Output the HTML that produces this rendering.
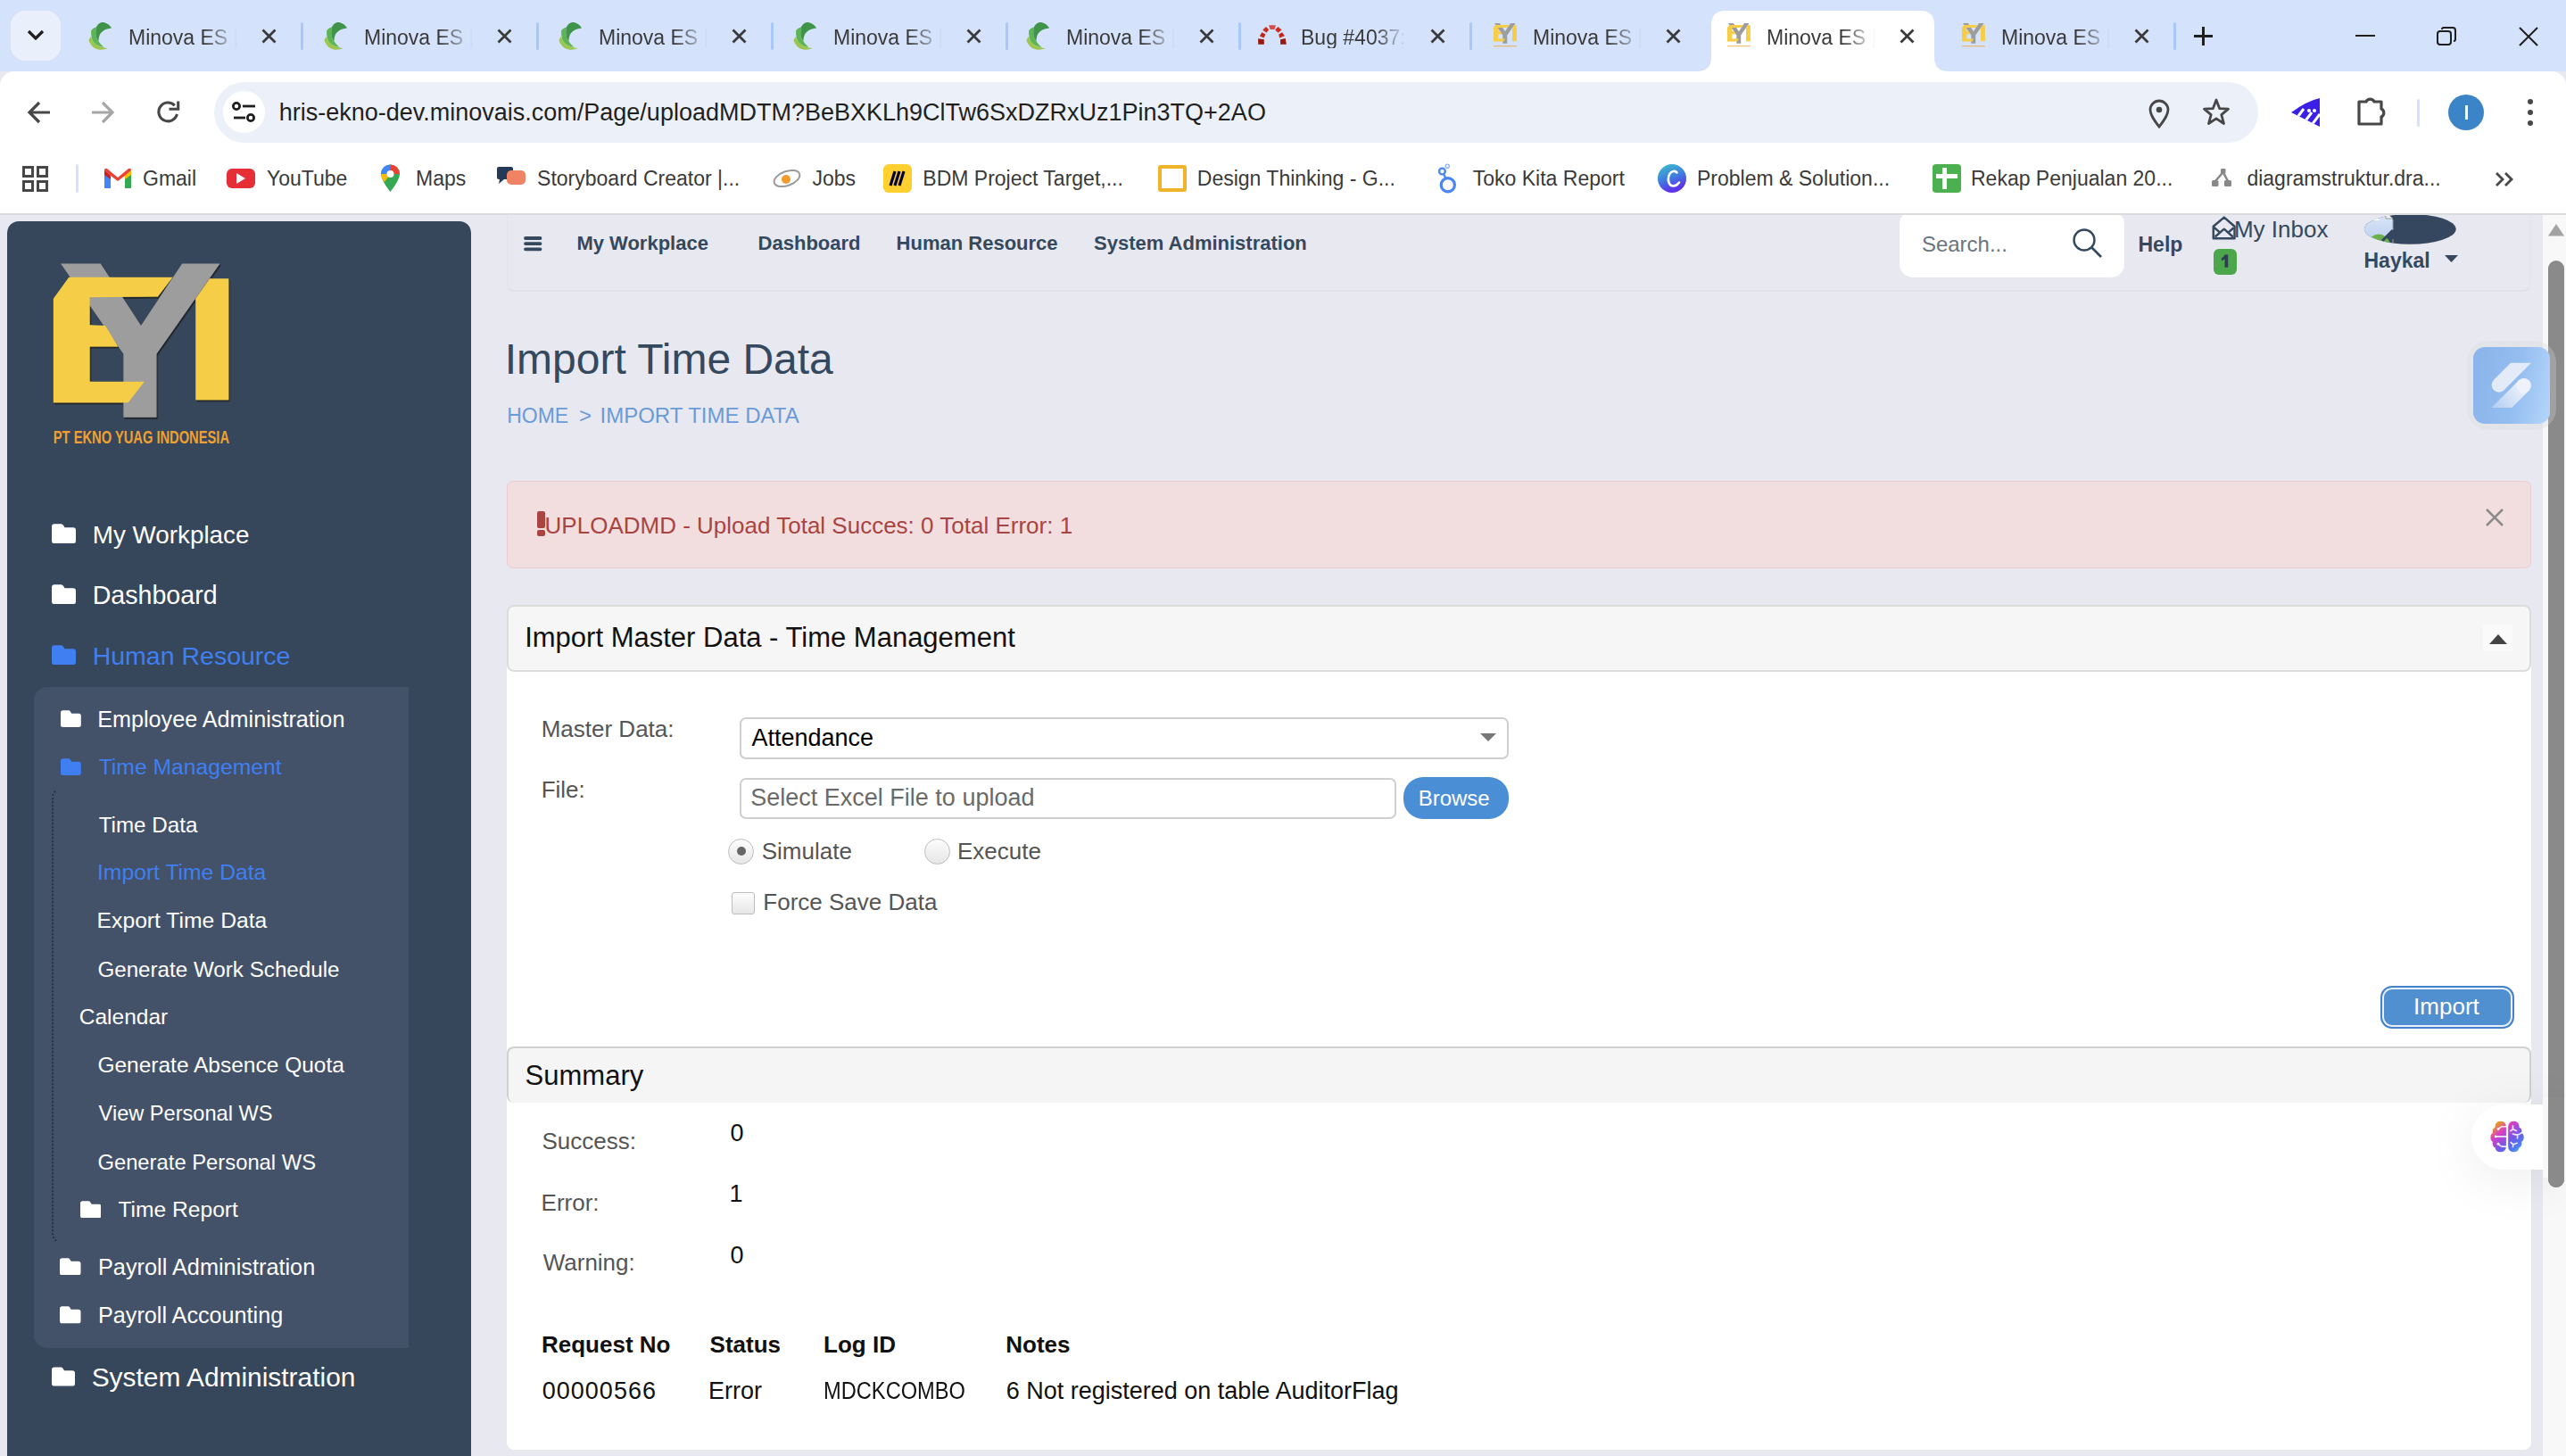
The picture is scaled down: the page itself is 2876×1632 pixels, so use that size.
<!DOCTYPE html>
<html><head><meta charset="utf-8"><style>
html,body{margin:0;padding:0;}
body{width:2876px;height:1632px;overflow:hidden;position:relative;background:#e8e8f0;font-family:"Liberation Sans",sans-serif;}
.t{position:absolute;white-space:nowrap;line-height:1;}
.r{position:absolute;}
.tabt{overflow:hidden;-webkit-mask-image:linear-gradient(90deg,#000 70%,transparent 100%);mask-image:linear-gradient(90deg,#000 70%,transparent 100%);}
</style></head><body>
<div class="r" style="left:0px;top:241px;width:2876px;height:1391px;background:#e8e8f0"></div>
<div class="r" style="left:2850px;top:241px;width:26px;height:1391px;background:#f8f8f8"></div>
<svg class="r" style="left:2856px;top:250px;" width="18" height="16" viewBox="0 0 18 16"><path d="M9 1 L18 14.5 L0 14.5 Z" fill="#a3a3a3"/></svg>
<div class="r" style="left:2856px;top:292px;width:18px;height:1039px;background:#8a8a8a;border-radius:9px"></div>
<div class="r" style="left:8px;top:248px;width:520px;height:1452px;background:#36475c;border-radius:13px"></div>
<svg class="r" style="left:50px;top:285px;" width="220" height="220" viewBox="0 0 1456 1456"><defs><filter id="sh" x="-5%" y="-5%" width="115%" height="115%"><feDropShadow dx="8" dy="12" stdDeviation="5" flood-color="#141414" flood-opacity="0.8"/></filter></defs><g filter="url(#sh)"><path d="M120 70 L415 70 L715 530 L1020 70 L1300 70 L830 740 L830 1210 L585 1210 L585 740 Z" fill="#9d9d9d"/><path d="M65 330 L180 170 L950 170 L840 315 L335 320 L335 525 L450 530 L545 685 L335 685 L335 945 L740 945 L620 1100 L65 1100 Z" fill="#f5cd47"/><path d="M1120 330 L1225 180 L1365 180 L1365 1080 L1120 1080 Z" fill="#f5cd47"/></g><text x="65" y="1405" font-family="Liberation Sans" font-weight="700" font-size="128" fill="#f0a030" textLength="1305" lengthAdjust="spacingAndGlyphs">PT EKNO YUAG INDONESIA</text></svg>
<svg class="r" style="left:57.6px;top:586.7px;" width="27" height="22.3" viewBox="0 0 27 22"><path d="M0 3 Q0 0 3 0 H10.5 Q12 0 13 1.5 L14.5 4 H24 Q27 4 27 7 V19 Q27 22 24 22 H3 Q0 22 0 19 Z" fill="#fff"/></svg>
<div class="t" style="left:103.8px;top:585.5px;font-size:27.8px;color:#fff;font-weight:400;">My Workplace</div>
<svg class="r" style="left:57.6px;top:654.7px;" width="27" height="22.3" viewBox="0 0 27 22"><path d="M0 3 Q0 0 3 0 H10.5 Q12 0 13 1.5 L14.5 4 H24 Q27 4 27 7 V19 Q27 22 24 22 H3 Q0 22 0 19 Z" fill="#fff"/></svg>
<div class="t" style="left:103.7px;top:652.8px;font-size:28.6px;color:#fff;font-weight:400;">Dashboard</div>
<svg class="r" style="left:57.6px;top:722.7px;" width="27" height="22.3" viewBox="0 0 27 22"><path d="M0 3 Q0 0 3 0 H10.5 Q12 0 13 1.5 L14.5 4 H24 Q27 4 27 7 V19 Q27 22 24 22 H3 Q0 22 0 19 Z" fill="#3f7ff2"/></svg>
<div class="t" style="left:103.7px;top:720.9px;font-size:28.5px;color:#3f7ff2;font-weight:400;">Human Resource</div>
<div class="r" style="left:38px;top:770px;width:420px;height:741px;background:#435269;border-radius:15px 0 0 15px"></div>
<svg class="r" style="left:68px;top:796px;" width="22.8" height="19.3" viewBox="0 0 27 22"><path d="M0 3 Q0 0 3 0 H10.5 Q12 0 13 1.5 L14.5 4 H24 Q27 4 27 7 V19 Q27 22 24 22 H3 Q0 22 0 19 Z" fill="#fff"/></svg>
<div class="t" style="left:109.2px;top:793.7px;font-size:25.2px;color:#fff;font-weight:400;">Employee Administration</div>
<svg class="r" style="left:68px;top:850px;" width="22.8" height="19.3" viewBox="0 0 27 22"><path d="M0 3 Q0 0 3 0 H10.5 Q12 0 13 1.5 L14.5 4 H24 Q27 4 27 7 V19 Q27 22 24 22 H3 Q0 22 0 19 Z" fill="#3f7ff2"/></svg>
<div class="t" style="left:110.7px;top:848.1px;font-size:24.7px;color:#3f7ff2;font-weight:400;">Time Management</div>
<svg class="r" style="left:55px;top:886px;" width="12" height="508" viewBox="0 0 12 508"><path d="M7 1 Q4 3 4 8 V496 Q4 503 10 506" fill="none" stroke="#1e2a3a" stroke-width="1.6" stroke-dasharray="2 2"/></svg>
<div class="t" style="left:110.7px;top:912.5px;font-size:24.2px;color:#fff;font-weight:400;">Time Data</div>
<div class="t" style="left:109.0px;top:966.1px;font-size:24.7px;color:#3f7ff2;font-weight:400;">Import Time Data</div>
<div class="t" style="left:108.6px;top:1020.1px;font-size:24.7px;color:#fff;font-weight:400;">Export Time Data</div>
<div class="t" style="left:109.4px;top:1075.0px;font-size:24.2px;color:#fff;font-weight:400;">Generate Work Schedule</div>
<div class="t" style="left:88.8px;top:1128.3px;font-size:24.5px;color:#fff;font-weight:400;">Calendar</div>
<div class="t" style="left:109.4px;top:1182.3px;font-size:24.5px;color:#fff;font-weight:400;">Generate Absence Quota</div>
<div class="t" style="left:110.6px;top:1237.0px;font-size:23.6px;color:#fff;font-weight:400;">View Personal WS</div>
<div class="t" style="left:109.4px;top:1290.9px;font-size:23.8px;color:#fff;font-weight:400;">Generate Personal WS</div>
<svg class="r" style="left:89.5px;top:1345.5px;" width="23.5" height="19.5" viewBox="0 0 27 22"><path d="M0 3 Q0 0 3 0 H10.5 Q12 0 13 1.5 L14.5 4 H24 Q27 4 27 7 V19 Q27 22 24 22 H3 Q0 22 0 19 Z" fill="#fff"/></svg>
<div class="t" style="left:132.5px;top:1344.2px;font-size:24.6px;color:#fff;font-weight:400;">Time Report</div>
<svg class="r" style="left:67px;top:1409.5px;" width="23.5" height="19.5" viewBox="0 0 27 22"><path d="M0 3 Q0 0 3 0 H10.5 Q12 0 13 1.5 L14.5 4 H24 Q27 4 27 7 V19 Q27 22 24 22 H3 Q0 22 0 19 Z" fill="#fff"/></svg>
<div class="t" style="left:110.0px;top:1407.6px;font-size:25.3px;color:#fff;font-weight:400;">Payroll Administration</div>
<svg class="r" style="left:67px;top:1464px;" width="23.5" height="19.5" viewBox="0 0 27 22"><path d="M0 3 Q0 0 3 0 H10.5 Q12 0 13 1.5 L14.5 4 H24 Q27 4 27 7 V19 Q27 22 24 22 H3 Q0 22 0 19 Z" fill="#fff"/></svg>
<div class="t" style="left:110.0px;top:1462.3px;font-size:25.2px;color:#fff;font-weight:400;">Payroll Accounting</div>
<svg class="r" style="left:58px;top:1532px;" width="26" height="22" viewBox="0 0 27 22"><path d="M0 3 Q0 0 3 0 H10.5 Q12 0 13 1.5 L14.5 4 H24 Q27 4 27 7 V19 Q27 22 24 22 H3 Q0 22 0 19 Z" fill="#fff"/></svg>
<div class="t" style="left:102.7px;top:1528.7px;font-size:29.9px;color:#fff;font-weight:400;">System Administration</div>
<div class="r" style="left:568px;top:230px;width:2268px;height:97px;border-bottom:2px solid #dfe0e9;border-left:1px solid rgba(223,224,233,0.5);border-right:1px solid rgba(223,224,233,0.5);border-radius:0 0 8px 8px;box-sizing:border-box"></div>
<svg class="r" style="left:585px;top:262px;" width="25" height="22" viewBox="0 0 25 22"><path d="M4 5 H20.5 M4 11.1 H20.5 M4 17.3 H20.5" stroke="#34495e" stroke-width="3.8" stroke-linecap="round"/></svg>
<div class="t" style="left:646.4px;top:262.4px;font-size:22px;color:#34495e;font-weight:700;">My Workplace</div>
<div class="t" style="left:849.6px;top:262.4px;font-size:22px;color:#34495e;font-weight:700;">Dashboard</div>
<div class="t" style="left:1004.6px;top:262.4px;font-size:22px;color:#34495e;font-weight:700;">Human Resource</div>
<div class="t" style="left:1226.0px;top:262.4px;font-size:22px;color:#34495e;font-weight:700;">System Administration</div>
<div class="r" style="left:2128.7px;top:236px;width:251.9000000000001px;height:74.69999999999999px;background:#fff;border-radius:15px"></div>
<div class="r" style="left:2128px;top:236px;width:254px;height:5px;background:#fff"></div>
<div class="t" style="left:2153.9px;top:261.7px;font-size:24px;color:#6c757d;font-weight:400;">Search...</div>
<svg class="r" style="left:2322px;top:255px;" width="36" height="36" viewBox="0 0 36 36"><circle cx="14" cy="14" r="11.5" fill="none" stroke="#34495e" stroke-width="2.4"/><path d="M22.5 22.5 L33 33" stroke="#34495e" stroke-width="2.6"/></svg>
<div class="t" style="left:2396.5px;top:262.5px;font-size:23px;color:#34495e;font-weight:700;">Help</div>
<svg class="r" style="left:2478px;top:242px;" width="28" height="27" viewBox="0 0 28 27"><path d="M2.8 11.8 L14.8 1.6 L26.5 11.8 V25.2 H2.8 Z" fill="none" stroke="#34495e" stroke-width="2.5" stroke-linejoin="round"/><path d="M4.6 23.5 L14.8 14.7 L24.7 23.5 M3.7 13 L9.5 18.2 M25.3 13.5 L20 18.2" fill="none" stroke="#34495e" stroke-width="2.4" stroke-linejoin="round"/></svg>
<div class="t" style="left:2503.9px;top:243.6px;font-size:26px;color:#34495e;font-weight:400;">My Inbox</div>
<div class="r" style="left:2481px;top:279px;width:26px;height:29px;background:#4ca64c;border-radius:6px"></div>
<svg class="r" style="left:2481px;top:279px;" width="26" height="29" viewBox="0 0 26 29"><path d="M12.6 6.4 H16.2 V20.7 H12.5 V11.3 Q10.8 12.9 8.9 13.5 V10.2 Q11.5 9.2 12.6 6.4 Z" fill="#2c3e50"/></svg>
<svg class="r" style="left:2648px;top:238px;" width="108" height="38" viewBox="0 0 108 38"><defs><clipPath id="av"><ellipse cx="53.3" cy="18.8" rx="51.4" ry="16.9"/></clipPath><linearGradient id="avg" x1="0" y1="0" x2="0" y2="1"><stop offset="0" stop-color="#dbe6f8"/><stop offset="1" stop-color="#b9cdf0"/></linearGradient></defs><g clip-path="url(#av)"><rect x="0" y="0" width="108" height="38" fill="#34475e"/><path d="M0 0 H26 L34 8 V20 L24 30 L29 34 H34 V38 H0 Z" fill="url(#avg)"/><path d="M26 0 V7 H34" fill="#f4f4f4" stroke="#9a9a9a" stroke-width="1"/><path d="M8 7 Q12 4 17 6 L19 9 H6 Z" fill="#fff"/><path d="M4 34 Q12 22 22 25 Q28 28 31 34 Z" fill="#6ab04c"/><path d="M22 32 L34 20" stroke="#34475e" stroke-width="3"/><path d="M34 8 V20 M34 30 V38" stroke="#9a9a9a" stroke-width="1"/></g></svg>
<div class="t" style="left:2649.5px;top:281.0px;font-size:23px;color:#34495e;font-weight:700;">Haykal</div>
<svg class="r" style="left:2740px;top:286px;" width="16" height="9" viewBox="0 0 16 9"><path d="M0 0 H15 L7.5 8 Z" fill="#34495e"/></svg>
<div class="t" style="left:565.7px;top:379.4px;font-size:48px;color:#34495e;font-weight:400;">Import Time Data</div>
<div class="t" style="left:568.2px;top:454.5px;font-size:23px;color:#6a9bd8;font-weight:400;">HOME</div>
<div class="t" style="left:648.9px;top:453.7px;font-size:24px;color:#6a9bd8;font-weight:400;">&gt;</div>
<div class="t" style="left:672.5px;top:453.7px;font-size:24px;color:#6a9bd8;font-weight:400;">IMPORT TIME DATA</div>
<div class="r" style="left:2765px;top:382px;width:100px;height:100px;background:rgba(215,215,222,0.3);border-radius:24px"></div>
<div class="r" style="left:2772px;top:389px;width:86px;height:86px;border-radius:13px;background:linear-gradient(100deg,#8ab5ea 0%,#94bdf0 55%,#b5d6fa 100%)"></div>
<svg class="r" style="left:2760px;top:380px;" width="116" height="110" viewBox="0 0 1535 1456"><defs><linearGradient id="fbg" gradientUnits="userSpaceOnUse" x1="900" y1="700" x2="480" y2="1020"><stop offset="0" stop-color="#eef2fb"/><stop offset="1" stop-color="#b6cff2"/></linearGradient></defs><path d="M715 355 L1020 355 L616 759 L464 607 Z" fill="#e3eaf8"/><circle cx="540" cy="683" r="108" fill="#e3eaf8"/><path d="M834 614 L986 766 L732 1020 L428 1020 Z" fill="url(#fbg)"/><circle cx="910" cy="690" r="108" fill="#eef2fb"/></svg>
<div class="r" style="left:568px;top:539px;width:2269px;height:98px;background:#f2dede;border:1.5px solid #ebccd1;border-radius:7px;box-sizing:border-box"></div>
<svg class="r" style="left:601px;top:572px;" width="11" height="30" viewBox="0 0 11 30"><rect x="1" y="1" width="9" height="19" rx="2" fill="#a94442"/><rect x="1" y="22" width="9" height="7" rx="2" fill="#a94442"/></svg>
<div class="t" style="left:610.6px;top:575.6px;font-size:26px;color:#a94442;font-weight:400;">UPLOADMD - Upload Total Succes: 0 Total Error: 1</div>
<svg class="r" style="left:2785px;top:569px;" width="22" height="22" viewBox="0 0 22 22"><path d="M2 2 L20 20 M20 2 L2 20" stroke="#8a8a8a" stroke-width="2.6"/></svg>
<div class="r" style="left:568px;top:745px;width:2269px;height:430px;background:#fff"></div>
<div class="r" style="left:568px;top:678px;width:2269px;height:75px;background:#f6f6f6;border:2px solid #dcdcdc;border-radius:8px;box-sizing:border-box"></div>
<div class="t" style="left:588.2px;top:698.8px;font-size:31px;color:#111;font-weight:400;">Import Master Data - Time Management</div>
<div class="r" style="left:2783px;top:700px;width:33px;height:30px;background:#fafafa"></div>
<svg class="r" style="left:2789px;top:708px;" width="22" height="16" viewBox="0 0 22 16"><path d="M1 14 L11 3 L21 14 Z" fill="#444"/></svg>
<div class="t" style="left:606.7px;top:804.0px;font-size:26px;color:#555;font-weight:400;">Master Data:</div>
<div class="r" style="left:829px;top:803.5px;width:862px;height:47.0px;background:#fff;border:2px solid #cfcfcf;border-radius:7px;box-sizing:border-box"></div>
<div class="t" style="left:842.5px;top:813.6px;font-size:27px;color:#000;font-weight:400;">Attendance</div>
<svg class="r" style="left:1659px;top:822px;" width="18" height="10" viewBox="0 0 18 10"><path d="M0 0 H18 L9 9 Z" fill="#777"/></svg>
<div class="t" style="left:606.7px;top:872.0px;font-size:26px;color:#555;font-weight:400;">File:</div>
<div class="r" style="left:829px;top:871.8px;width:736px;height:46.200000000000045px;background:#fff;border:2px solid #cfcfcf;border-radius:7px;box-sizing:border-box"></div>
<div class="t" style="left:841.3px;top:881.1px;font-size:27px;color:#6a6a6a;font-weight:400;">Select Excel File to upload</div>
<div class="r" style="left:1572.6px;top:871px;width:118.40000000000009px;height:47px;background:#4a8fd6;border-radius:22px"></div>
<div class="t" style="left:1589.7px;top:882.7px;font-size:24px;color:#fff;font-weight:400;">Browse</div>
<div class="r" style="left:816px;top:939.5px;width:29px;height:29px;border-radius:50%;border:1.5px solid #bdbdbd;box-sizing:border-box;background:linear-gradient(#fdfdfd,#e6e6e6)"></div>
<div class="r" style="left:826px;top:949px;width:10px;height:10px;background:#666;border-radius:50%"></div>
<div class="t" style="left:853.7px;top:940.7px;font-size:26px;color:#555;font-weight:400;">Simulate</div>
<div class="r" style="left:1036px;top:939.5px;width:29px;height:29px;border-radius:50%;border:1.5px solid #bdbdbd;box-sizing:border-box;background:linear-gradient(#fdfdfd,#e6e6e6)"></div>
<div class="t" style="left:1072.9px;top:940.7px;font-size:26px;color:#555;font-weight:400;">Execute</div>
<div class="r" style="left:820px;top:999.5px;width:26px;height:25px;border-radius:3px;border:1.5px solid #bdbdbd;box-sizing:border-box;background:linear-gradient(#fdfdfd,#e6e6e6)"></div>
<div class="t" style="left:855.3px;top:998.4px;font-size:26px;color:#555;font-weight:400;">Force Save Data</div>
<div class="r" style="left:2668px;top:1105px;width:150px;height:48px;background:#5190d0;border:2px solid #4582cc;box-shadow:inset 0 0 0 2px #e8f0fb;border-radius:13px;box-sizing:border-box"></div>
<div class="t" style="left:2705.1px;top:1115.0px;font-size:26px;color:#fff;font-weight:400;">Import</div>
<div class="r" style="left:568px;top:1173px;width:2269px;height:452px;background:#fff;border-radius:0 0 8px 8px"></div>
<div class="r" style="left:568px;top:1173px;width:2269px;height:63px;background:#f5f5f5;border:2px solid #d0d0d0;border-bottom:none;border-radius:8px;box-sizing:border-box"></div>
<div class="t" style="left:588.6px;top:1189.8px;font-size:31px;color:#111;font-weight:400;">Summary</div>
<div class="t" style="left:607.5px;top:1266.4px;font-size:26px;color:#555;font-weight:400;">Success:</div>
<div class="t" style="left:818.5px;top:1257.1px;font-size:27px;color:#111;font-weight:400;">0</div>
<div class="t" style="left:606.6px;top:1334.5px;font-size:26px;color:#555;font-weight:400;">Error:</div>
<div class="t" style="left:817.4px;top:1325.4px;font-size:27px;color:#111;font-weight:400;">1</div>
<div class="t" style="left:608.7px;top:1402.0px;font-size:26px;color:#555;font-weight:400;">Warning:</div>
<div class="t" style="left:818.5px;top:1393.5px;font-size:27px;color:#111;font-weight:400;">0</div>
<div class="t" style="left:607.0px;top:1494.4px;font-size:26px;color:#111;font-weight:700;">Request No</div>
<div class="t" style="left:795.6px;top:1494.4px;font-size:26px;color:#111;font-weight:700;">Status</div>
<div class="t" style="left:923.1px;top:1494.4px;font-size:26px;color:#111;font-weight:700;">Log ID</div>
<div class="t" style="left:1127.3px;top:1494.4px;font-size:26px;color:#111;font-weight:700;">Notes</div>
<div class="t" style="left:607.8px;top:1546.4px;font-size:27px;color:#111;font-weight:400;letter-spacing:1px;">00000566</div>
<div class="t" style="left:794.1px;top:1546.4px;font-size:27px;color:#111;font-weight:400;">Error</div>
<div class="t" style="left:922.6px;top:1546.4px;font-size:27px;color:#111;font-weight:400;transform:scaleX(0.876);transform-origin:0 0;">MDCKCOMBO</div>
<div class="t" style="left:1127.7px;top:1546.4px;font-size:27px;color:#111;font-weight:400;">6 Not registered on table AuditorFlag</div>
<div class="r" style="left:2770px;top:1238px;width:100px;height:73px;border-radius:37px 0 0 37px;background:#fff;box-shadow:0 10px 60px rgba(0,0,0,0.08)"></div>
<div class="r" style="left:2850px;top:1230px;width:26px;height:90px;background:#f8f8f8"></div>
<div class="r" style="left:2856px;top:1230px;width:18px;height:101px;background:#8a8a8a;border-radius:0 0 9px 9px"></div>
<svg class="r" style="left:2780px;top:1245px;" width="60" height="55" viewBox="0 0 1588 1456"><defs><linearGradient id="bg" x1="0.2" y1="0.15" x2="0.85" y2="0.9"><stop offset="0" stop-color="#eb9a25"/><stop offset="0.25" stop-color="#d83ec6"/><stop offset="0.6" stop-color="#6f5ae8"/><stop offset="0.85" stop-color="#4e7df0"/><stop offset="1" stop-color="#5ab0f2"/></linearGradient><clipPath id="bc"><circle cx="600" cy="470" r="165"/><circle cx="990" cy="470" r="165"/><circle cx="480" cy="610" r="120"/><circle cx="1110" cy="610" r="120"/><circle cx="455" cy="790" r="160"/><circle cx="1135" cy="790" r="160"/><circle cx="500" cy="975" r="140"/><circle cx="1090" cy="975" r="140"/><circle cx="600" cy="1065" r="165"/><circle cx="990" cy="1065" r="165"/><rect x="470" y="470" width="295" height="595"/><rect x="825" y="470" width="295" height="595"/></clipPath></defs><rect x="250" y="250" width="1100" height="1050" fill="url(#bg)" clip-path="url(#bc)"/><g fill="none" stroke="#fff" stroke-opacity="0.85" stroke-width="45" stroke-linecap="round"><path d="M530 545 Q600 470 650 470 H770"/><path d="M455 765 H770"/><path d="M530 985 Q600 1060 650 1060 H770"/><path d="M965 455 V550 L895 600 M965 550 L1070 595"/><path d="M965 690 Q1100 750 1230 650 M1100 725 V815"/><path d="M905 940 L975 1000 L1090 960 M975 1000 L965 1070"/></g><circle cx="530" cy="545" r="38" fill="#fff"/><circle cx="455" cy="765" r="38" fill="#fff"/><circle cx="530" cy="985" r="38" fill="#fff"/></svg>
<div class="r" style="left:0px;top:0px;width:2876px;height:80px;background:#d5e2fb"></div>
<div class="r" style="left:12px;top:12px;width:56px;height:56px;background:#e9f0fc;border-radius:16px"></div>
<svg class="r" style="left:28px;top:30px;" width="24" height="20" viewBox="0 0 24 20"><path d="M4 5 L12 13 L20 5" fill="none" stroke="#1f1f1f" stroke-width="3.2"/></svg>
<div class="r" style="left:1902px;top:12px;width:282px;height:68px;"><svg width="282" height="68" viewBox="0 0 282 68" style="position:absolute;left:0;top:0"><path d="M0 68 Q16 68 16 52 L16 16 Q16 0 32 0 L250 0 Q266 0 266 16 L266 52 Q266 68 282 68 Z" fill="#fff"/></svg></div>
<svg class="r" style="left:95.4px;top:20px;" width="35" height="40" viewBox="0 0 1274 1456"><path d="M260 520 C300 450 380 400 470 380 C450 480 440 600 450 700 C470 820 520 900 560 950 C620 1050 690 1130 780 1200 C600 1180 450 1100 350 980 C280 880 250 700 260 520 Z" fill="#5db455"/><path d="M470 380 C520 290 580 200 700 185 C850 180 1000 260 1095 420 C950 440 800 480 700 570 C610 650 570 760 560 950 C520 900 470 820 450 700 C440 600 450 480 470 380 Z" fill="#40944a"/><path d="M160 920 C190 850 220 790 250 760 C290 880 340 980 420 1050 C560 1170 750 1230 940 1250 C830 1290 720 1310 600 1300 C420 1280 260 1180 160 920 Z" fill="#9cc650"/></svg>
<div class="t tabt" style="left:144px;top:31px;font-size:23px;color:#3a3a3a;width:122px;">Minova ES | HRIS</div>
<svg class="r" style="left:293px;top:32px;" width="17" height="17" viewBox="0 0 17 17"><path d="M1.5 1.5 L15.5 15.5 M15.5 1.5 L1.5 15.5" stroke="#3a3a3a" stroke-width="2.8"/></svg>
<div class="r" style="left:336.6px;top:24.5px;width:3.5px;height:31.0px;background:#a8c7fa;border-radius:2px"></div>
<svg class="r" style="left:359.4px;top:20px;" width="35" height="40" viewBox="0 0 1274 1456"><path d="M260 520 C300 450 380 400 470 380 C450 480 440 600 450 700 C470 820 520 900 560 950 C620 1050 690 1130 780 1200 C600 1180 450 1100 350 980 C280 880 250 700 260 520 Z" fill="#5db455"/><path d="M470 380 C520 290 580 200 700 185 C850 180 1000 260 1095 420 C950 440 800 480 700 570 C610 650 570 760 560 950 C520 900 470 820 450 700 C440 600 450 480 470 380 Z" fill="#40944a"/><path d="M160 920 C190 850 220 790 250 760 C290 880 340 980 420 1050 C560 1170 750 1230 940 1250 C830 1290 720 1310 600 1300 C420 1280 260 1180 160 920 Z" fill="#9cc650"/></svg>
<div class="t tabt" style="left:408px;top:31px;font-size:23px;color:#3a3a3a;width:122px;">Minova ES | HRIS</div>
<svg class="r" style="left:557px;top:32px;" width="17" height="17" viewBox="0 0 17 17"><path d="M1.5 1.5 L15.5 15.5 M15.5 1.5 L1.5 15.5" stroke="#3a3a3a" stroke-width="2.8"/></svg>
<div class="r" style="left:600.6px;top:24.5px;width:3.5px;height:31.0px;background:#a8c7fa;border-radius:2px"></div>
<svg class="r" style="left:622.4px;top:20px;" width="35" height="40" viewBox="0 0 1274 1456"><path d="M260 520 C300 450 380 400 470 380 C450 480 440 600 450 700 C470 820 520 900 560 950 C620 1050 690 1130 780 1200 C600 1180 450 1100 350 980 C280 880 250 700 260 520 Z" fill="#5db455"/><path d="M470 380 C520 290 580 200 700 185 C850 180 1000 260 1095 420 C950 440 800 480 700 570 C610 650 570 760 560 950 C520 900 470 820 450 700 C440 600 450 480 470 380 Z" fill="#40944a"/><path d="M160 920 C190 850 220 790 250 760 C290 880 340 980 420 1050 C560 1170 750 1230 940 1250 C830 1290 720 1310 600 1300 C420 1280 260 1180 160 920 Z" fill="#9cc650"/></svg>
<div class="t tabt" style="left:671px;top:31px;font-size:23px;color:#3a3a3a;width:122px;">Minova ES | HRIS</div>
<svg class="r" style="left:820px;top:32px;" width="17" height="17" viewBox="0 0 17 17"><path d="M1.5 1.5 L15.5 15.5 M15.5 1.5 L1.5 15.5" stroke="#3a3a3a" stroke-width="2.8"/></svg>
<div class="r" style="left:863.6px;top:24.5px;width:3.5px;height:31.0px;background:#a8c7fa;border-radius:2px"></div>
<svg class="r" style="left:885.4px;top:20px;" width="35" height="40" viewBox="0 0 1274 1456"><path d="M260 520 C300 450 380 400 470 380 C450 480 440 600 450 700 C470 820 520 900 560 950 C620 1050 690 1130 780 1200 C600 1180 450 1100 350 980 C280 880 250 700 260 520 Z" fill="#5db455"/><path d="M470 380 C520 290 580 200 700 185 C850 180 1000 260 1095 420 C950 440 800 480 700 570 C610 650 570 760 560 950 C520 900 470 820 450 700 C440 600 450 480 470 380 Z" fill="#40944a"/><path d="M160 920 C190 850 220 790 250 760 C290 880 340 980 420 1050 C560 1170 750 1230 940 1250 C830 1290 720 1310 600 1300 C420 1280 260 1180 160 920 Z" fill="#9cc650"/></svg>
<div class="t tabt" style="left:934px;top:31px;font-size:23px;color:#3a3a3a;width:122px;">Minova ES | HRIS</div>
<svg class="r" style="left:1083px;top:32px;" width="17" height="17" viewBox="0 0 17 17"><path d="M1.5 1.5 L15.5 15.5 M15.5 1.5 L1.5 15.5" stroke="#3a3a3a" stroke-width="2.8"/></svg>
<div class="r" style="left:1126.6px;top:24.5px;width:3.5px;height:31.0px;background:#a8c7fa;border-radius:2px"></div>
<svg class="r" style="left:1146.4px;top:20px;" width="35" height="40" viewBox="0 0 1274 1456"><path d="M260 520 C300 450 380 400 470 380 C450 480 440 600 450 700 C470 820 520 900 560 950 C620 1050 690 1130 780 1200 C600 1180 450 1100 350 980 C280 880 250 700 260 520 Z" fill="#5db455"/><path d="M470 380 C520 290 580 200 700 185 C850 180 1000 260 1095 420 C950 440 800 480 700 570 C610 650 570 760 560 950 C520 900 470 820 450 700 C440 600 450 480 470 380 Z" fill="#40944a"/><path d="M160 920 C190 850 220 790 250 760 C290 880 340 980 420 1050 C560 1170 750 1230 940 1250 C830 1290 720 1310 600 1300 C420 1280 260 1180 160 920 Z" fill="#9cc650"/></svg>
<div class="t tabt" style="left:1195px;top:31px;font-size:23px;color:#3a3a3a;width:122px;">Minova ES | HRIS</div>
<svg class="r" style="left:1344px;top:32px;" width="17" height="17" viewBox="0 0 17 17"><path d="M1.5 1.5 L15.5 15.5 M15.5 1.5 L1.5 15.5" stroke="#3a3a3a" stroke-width="2.8"/></svg>
<div class="r" style="left:1387.6px;top:24.5px;width:3.5px;height:31.0px;background:#a8c7fa;border-radius:2px"></div>
<svg class="r" style="left:1405px;top:20px;" width="45" height="40" viewBox="0 0 1638 1456"><path d="M620 300 L910 300 L850 470 L680 470 Z" fill="#d94b45"/><path d="M370 490 L510 360 L625 485 L525 610 Z" fill="#cd2d1e"/><path d="M880 490 L1000 360 L1150 490 L1000 610 Z" fill="#cd2d1e"/><path d="M250 750 L340 590 L490 670 L420 820 Z" fill="#bf2718"/><path d="M1030 670 L1170 590 L1270 740 L1060 820 Z" fill="#bf2718"/><path d="M185 850 L430 880 L430 1080 L190 1080 Z" fill="#971a10"/><path d="M1095 880 L1300 840 L1340 1080 L1095 1080 Z" fill="#971a10"/></svg>
<div class="t tabt" style="left:1458px;top:31px;font-size:23px;color:#3a3a3a;width:118px;">Bug #4037: Total</div>
<svg class="r" style="left:1603px;top:32px;" width="17" height="17" viewBox="0 0 17 17"><path d="M1.5 1.5 L15.5 15.5 M15.5 1.5 L1.5 15.5" stroke="#3a3a3a" stroke-width="2.8"/></svg>
<div class="r" style="left:1646.6px;top:24.5px;width:3.5px;height:31.0px;background:#a8c7fa;border-radius:2px"></div>
<svg class="r" style="left:1673px;top:25px;" width="28" height="29" viewBox="20 20 1400 1450"><path d="M120 70 L415 70 L715 530 L1020 70 L1300 70 L830 740 L830 1210 L585 1210 L585 740 Z" fill="#9d9d9d"/><path d="M65 330 L180 170 L950 170 L840 315 L335 320 L335 525 L450 530 L545 685 L335 685 L335 945 L740 945 L620 1100 L65 1100 Z" fill="#f5cd47"/><path d="M1120 330 L1225 180 L1365 180 L1365 1080 L1120 1080 Z" fill="#f5cd47"/><rect x="65" y="1330" width="1300" height="50" fill="#f0a030" opacity="0.8"/></svg>
<div class="t tabt" style="left:1718px;top:31px;font-size:23px;color:#3a3a3a;width:122px;">Minova ES | HRIS</div>
<svg class="r" style="left:1867px;top:32px;" width="17" height="17" viewBox="0 0 17 17"><path d="M1.5 1.5 L15.5 15.5 M15.5 1.5 L1.5 15.5" stroke="#3a3a3a" stroke-width="2.8"/></svg>
<svg class="r" style="left:1935px;top:25px;" width="28" height="29" viewBox="20 20 1400 1450"><path d="M120 70 L415 70 L715 530 L1020 70 L1300 70 L830 740 L830 1210 L585 1210 L585 740 Z" fill="#9d9d9d"/><path d="M65 330 L180 170 L950 170 L840 315 L335 320 L335 525 L450 530 L545 685 L335 685 L335 945 L740 945 L620 1100 L65 1100 Z" fill="#f5cd47"/><path d="M1120 330 L1225 180 L1365 180 L1365 1080 L1120 1080 Z" fill="#f5cd47"/><rect x="65" y="1330" width="1300" height="50" fill="#f0a030" opacity="0.8"/></svg>
<div class="t tabt" style="left:1980px;top:31px;font-size:23px;color:#3a3a3a;width:122px;">Minova ES | HRIS</div>
<svg class="r" style="left:2129px;top:32px;" width="17" height="17" viewBox="0 0 17 17"><path d="M1.5 1.5 L15.5 15.5 M15.5 1.5 L1.5 15.5" stroke="#3a3a3a" stroke-width="2.8"/></svg>
<svg class="r" style="left:2198px;top:25px;" width="28" height="29" viewBox="20 20 1400 1450"><path d="M120 70 L415 70 L715 530 L1020 70 L1300 70 L830 740 L830 1210 L585 1210 L585 740 Z" fill="#9d9d9d"/><path d="M65 330 L180 170 L950 170 L840 315 L335 320 L335 525 L450 530 L545 685 L335 685 L335 945 L740 945 L620 1100 L65 1100 Z" fill="#f5cd47"/><path d="M1120 330 L1225 180 L1365 180 L1365 1080 L1120 1080 Z" fill="#f5cd47"/><rect x="65" y="1330" width="1300" height="50" fill="#f0a030" opacity="0.8"/></svg>
<div class="t tabt" style="left:2243px;top:31px;font-size:23px;color:#3a3a3a;width:122px;">Minova ES | HRIS</div>
<svg class="r" style="left:2392px;top:32px;" width="17" height="17" viewBox="0 0 17 17"><path d="M1.5 1.5 L15.5 15.5 M15.5 1.5 L1.5 15.5" stroke="#3a3a3a" stroke-width="2.8"/></svg>
<div class="r" style="left:2435.6px;top:24.5px;width:3.5px;height:31.0px;background:#a8c7fa;border-radius:2px"></div>
<svg class="r" style="left:2459px;top:30px;" width="21" height="21" viewBox="0 0 21 21"><path d="M10.5 0 V21 M0 10.5 H21" stroke="#1f1f1f" stroke-width="3"/></svg>
<svg class="r" style="left:2640px;top:38px;" width="22" height="4" viewBox="0 0 22 4"><path d="M0 2 H22" stroke="#1f1f1f" stroke-width="2"/></svg>
<svg class="r" style="left:2731px;top:30px;" width="22" height="22" viewBox="0 0 22 22"><rect x="1" y="5" width="15" height="15" rx="3" fill="none" stroke="#1f1f1f" stroke-width="2"/><path d="M6 3 Q6 1 8 1 H18 Q21 1 21 4 V14 Q21 16 19 16" fill="none" stroke="#1f1f1f" stroke-width="2"/></svg>
<svg class="r" style="left:2823px;top:30px;" width="22" height="22" viewBox="0 0 22 22"><path d="M1 1 L21 21 M21 1 L1 21" stroke="#1f1f1f" stroke-width="2"/></svg>
<div class="r" style="left:0;top:80px;width:2876px;height:160px;background:#fff;border-radius:16px 16px 0 0"></div>
<div class="r" style="left:1918px;top:80px;width:250px;height:20px;background:#fff"></div>
<div class="r" style="left:0px;top:239px;width:2876px;height:2px;background:#dadce0"></div>
<svg class="r" style="left:30px;top:112px;" width="28" height="28" viewBox="0 0 28 28"><path d="M26 14 H4 M14 3 L3 14 L14 25" fill="none" stroke="#474747" stroke-width="3.2"/></svg>
<svg class="r" style="left:101px;top:112px;" width="28" height="28" viewBox="0 0 28 28"><path d="M2 14 H24 M14 3 L25 14 L14 25" fill="none" stroke="#a6a6a6" stroke-width="3.2"/></svg>
<svg class="r" style="left:174px;top:112px;" width="28" height="28" viewBox="0 0 28 28"><path d="M21.8 6.2 A10.4 10.4 0 1 0 24.4 15.9" fill="none" stroke="#474747" stroke-width="3.1"/><path d="M15.5 10.2 H25.7 V1.5" fill="none" stroke="#474747" stroke-width="3.1"/></svg>
<div class="r" style="left:240px;top:92px;width:2291px;height:68px;background:#ecf1f9;border-radius:34px"></div>
<div class="r" style="left:250px;top:102px;width:47px;height:47px;background:#fff;border-radius:50%"></div>
<svg class="r" style="left:259px;top:113px;" width="30" height="26" viewBox="0 0 30 26"><circle cx="6" cy="6" r="3.6" fill="none" stroke="#1f1f1f" stroke-width="2.8"/><path d="M13 6 H27" stroke="#1f1f1f" stroke-width="2.8"/><circle cx="22" cy="19" r="3.6" fill="none" stroke="#1f1f1f" stroke-width="2.8"/><path d="M3 19 H16" stroke="#1f1f1f" stroke-width="2.8"/></svg>
<div class="t" style="left:312.7px;top:112.7px;font-size:27px;color:#1f1f1f;font-weight:400;">hris-ekno-dev.minovais.com/Page/uploadMDTM?BeBXKLh9ClTw6SxDZRxUz1Pin3TQ+2AO</div>
<svg class="r" style="left:2406px;top:110px;" width="28" height="36" viewBox="0 0 28 36"><path d="M14 32 C14 32 4 20 4 13 A10 10 0 0 1 24 13 C24 20 14 32 14 32 Z" fill="none" stroke="#474747" stroke-width="2.8"/><circle cx="14" cy="13" r="3.3" fill="#474747"/></svg>
<svg class="r" style="left:2466px;top:108px;" width="36" height="34" viewBox="0 0 36 34"><path d="M18 4 L21.6 13.6 L31.5 14.2 L23.8 20.6 L26.5 30.5 L18 24.8 L9.5 30.5 L12.2 20.6 L4.5 14.2 L14.4 13.6 Z" fill="none" stroke="#474747" stroke-width="2.8" stroke-linejoin="round"/></svg>
<svg class="r" style="left:2566px;top:108px;" width="36" height="36" viewBox="0 0 36 36"><defs><clipPath id="rk"><path d="M34 2 Q20 5 2 18 L34 34 Z"/></clipPath></defs><g clip-path="url(#rk)"><rect x="0" y="0" width="36" height="36" fill="#3b1fe6"/><path d="M4 30 L16 14 M13 34 L25 18 M22 36 L34 20" stroke="#fff" stroke-width="3"/></g><circle cx="22" cy="16" r="2" fill="#fff"/><circle cx="28" cy="16" r="2" fill="#fff"/></svg>
<svg class="r" style="left:2640px;top:104px;" width="38" height="40" viewBox="0 0 38 40"><path d="M4 10 H12 A5 5 0 0 1 21 10 H29 V18 A5 5 0 0 1 29 27 V35 H4 V27 H4 Z" fill="none" stroke="#474747" stroke-width="3.2" stroke-linejoin="round"/></svg>
<div class="r" style="left:2709px;top:111px;width:3px;height:31px;background:#d3e3fd;border-radius:2px"></div>
<div class="r" style="left:2744px;top:106px;width:40px;height:40px;background:#3b84c8;border-radius:50%"></div>
<div class="r" style="left:2762.5px;top:118px;width:3.0px;height:16px;background:#fff"></div>
<div class="r" style="left:2833px;top:111px;width:6px;height:6px;background:#474747;border-radius:50%"></div>
<div class="r" style="left:2833px;top:123px;width:6px;height:6px;background:#474747;border-radius:50%"></div>
<div class="r" style="left:2833px;top:135px;width:6px;height:6px;background:#474747;border-radius:50%"></div>
<svg class="r" style="left:25px;top:186px;" width="30" height="30" viewBox="0 0 30 30"><rect x="1.5" y="1.5" width="10" height="10" fill="none" stroke="#474747" stroke-width="3"/><rect x="17.5" y="1.5" width="10" height="10" fill="none" stroke="#474747" stroke-width="3"/><rect x="1.5" y="17.5" width="10" height="10" fill="none" stroke="#474747" stroke-width="3"/><rect x="17.5" y="17.5" width="10" height="10" fill="none" stroke="#474747" stroke-width="3"/></svg>
<div class="r" style="left:84.5px;top:184px;width:3.0px;height:32px;background:#d3e3fd;border-radius:2px"></div>
<svg class="r" style="left:117px;top:188px;" width="30" height="23" viewBox="0 0 30 23"><path d="M0 3 L0 23 L7 23 L7 9 Z" fill="#4285f4"/><path d="M30 3 L30 23 L23 23 L23 9 Z" fill="#34a853"/><path d="M0 3 Q0 0 3 1 L15 11 L27 1 Q30 0 30 3 L23 9 L15 15 L7 9 Z" fill="#ea4335"/><path d="M23 9 L30 3 L30 8 L23 13 Z" fill="#fbbc04"/><path d="M0 3 L7 9 L7 13 L0 8 Z" fill="#c5221f"/></svg>
<div class="t" style="left:160.0px;top:188.7px;font-size:23px;color:#3a3a3a;font-weight:400;">Gmail</div>
<div class="r" style="left:254px;top:189px;width:32px;height:22px;background:#e62e36;border-radius:6px"></div>
<svg class="r" style="left:264px;top:194px;" width="12" height="12" viewBox="0 0 12 12"><path d="M1 0 L11 6 L1 12 Z" fill="#fff"/></svg>
<div class="t" style="left:299.0px;top:188.7px;font-size:23px;color:#3a3a3a;font-weight:400;">YouTube</div>
<svg class="r" style="left:426px;top:184px;" width="23" height="32" viewBox="0 0 23 32"><path d="M11.5 31 C11.5 31 1 18 1 11 A10.5 10.5 0 0 1 22 11 C22 18 11.5 31 11.5 31 Z" fill="#34a853"/><path d="M1 11 A10.5 10.5 0 0 1 11.5 0.5 L11.5 11 Z" fill="#4285f4"/><path d="M22 11 A10.5 10.5 0 0 0 11.5 0.5 L11.5 11 Z" fill="#ea4335"/><path d="M1 11 C1 14 3 18 5 20 L11.5 11 Z" fill="#fbbc04"/><circle cx="11.5" cy="11" r="4" fill="#fff"/></svg>
<div class="t" style="left:466.0px;top:188.7px;font-size:23px;color:#3a3a3a;font-weight:400;">Maps</div>
<svg class="r" style="left:557px;top:187px;" width="33" height="24" viewBox="0 0 33 24"><rect x="0" y="0" width="18" height="14" rx="2" fill="#253858"/><path d="M3 14 L2 19 L8 14 Z" fill="#253858"/><rect x="11" y="4" width="21" height="16" rx="5" fill="#f08363"/></svg>
<div class="t" style="left:602.1px;top:188.7px;font-size:23px;color:#3a3a3a;font-weight:400;">Storyboard Creator |...</div>
<svg class="r" style="left:865px;top:188px;" width="34" height="24" viewBox="0 0 34 24"><ellipse cx="17" cy="12" rx="15" ry="8" fill="none" stroke="#9a9a9a" stroke-width="2" transform="rotate(-20 17 12)"/><circle cx="16" cy="13" r="5" fill="#f29b2c"/></svg>
<div class="t" style="left:910.5px;top:188.7px;font-size:23px;color:#3a3a3a;font-weight:400;">Jobs</div>
<div class="r" style="left:990px;top:184px;width:32px;height:32px;background:#ffd02f;border-radius:6px"></div>
<svg class="r" style="left:996px;top:191px;" width="20" height="18" viewBox="0 0 20 18"><path d="M2 17 L7 1 M7 17 L12 1 M12 17 L17 1" stroke="#050038" stroke-width="3.2"/></svg>
<div class="t" style="left:1034.3px;top:188.7px;font-size:23px;color:#3a3a3a;font-weight:400;">BDM Project Target,...</div>
<div class="r" style="left:1298px;top:185px;width:32px;height:30px;border:4.5px solid #f0b429;border-radius:3px;box-sizing:border-box"></div>
<div class="t" style="left:1341.8px;top:188.7px;font-size:23px;color:#3a3a3a;font-weight:400;">Design Thinking - G...</div>
<svg class="r" style="left:1600px;top:178px;" width="40" height="44" viewBox="0 0 40 44"><circle cx="22.8" cy="29.2" r="7.6" fill="none" stroke="#4a86f0" stroke-width="3.2"/><circle cx="16.4" cy="14" r="3.4" fill="none" stroke="#4a86f0" stroke-width="2.4"/><circle cx="22.2" cy="8.2" r="2.1" fill="none" stroke="#8fb4f7" stroke-width="1.4"/><path d="M18 17 L20.5 22" stroke="#4a86f0" stroke-width="2.4"/></svg>
<div class="t" style="left:1650.8px;top:188.7px;font-size:23px;color:#3a3a3a;font-weight:400;">Toko Kita Report</div>
<div class="r" style="left:1858px;top:184px;width:32px;height:32px;border-radius:50%;background:linear-gradient(160deg,#3cc4c8 0%,#3f7fe0 45%,#5a35e8 80%,#7a2be0 100%)"></div>
<svg class="r" style="left:1858px;top:184px;" width="32" height="32" viewBox="0 0 32 32"><path d="M21.5 9.5 C19.5 6.5 14 7.5 12.3 13.5 C10.8 19 12.8 24.5 17.5 24.5 C20 24.5 22.5 22.5 24 20.5" fill="none" stroke="#fff" stroke-width="2.6" stroke-linecap="round"/></svg>
<div class="t" style="left:1902.0px;top:188.7px;font-size:23px;color:#3a3a3a;font-weight:400;">Problem &amp; Solution...</div>
<div class="r" style="left:2166px;top:184px;width:32px;height:32px;background:#4caf50;border-radius:4px"></div>
<div class="r" style="left:2177px;top:188px;width:4.5px;height:24px;background:#fff"></div>
<div class="r" style="left:2170px;top:195px;width:24px;height:4.5px;background:#fff"></div>
<div class="t" style="left:2209.0px;top:188.7px;font-size:23px;color:#3a3a3a;font-weight:400;">Rekap Penjualan 20...</div>
<svg class="r" style="left:2477px;top:186px;" width="26" height="28" viewBox="0 0 26 28"><path d="M14.7 7 L6 17 M14.7 7 L20 17" stroke="#888" stroke-width="2.6"/><rect x="12" y="3" width="5.5" height="5.5" rx="1.3" fill="#888"/><rect x="2" y="16" width="7.5" height="7" rx="1.5" fill="#888"/><rect x="16" y="16" width="8" height="7" rx="1.5" fill="#888"/></svg>
<div class="t" style="left:2518.4px;top:188.7px;font-size:23px;color:#3a3a3a;font-weight:400;">diagramstruktur.dra...</div>
<svg class="r" style="left:2796px;top:192px;" width="24" height="18" viewBox="0 0 24 18"><path d="M2 2 L9 9 L2 16 M12 2 L19 9 L12 16" fill="none" stroke="#474747" stroke-width="2.8"/></svg>
</body></html>
